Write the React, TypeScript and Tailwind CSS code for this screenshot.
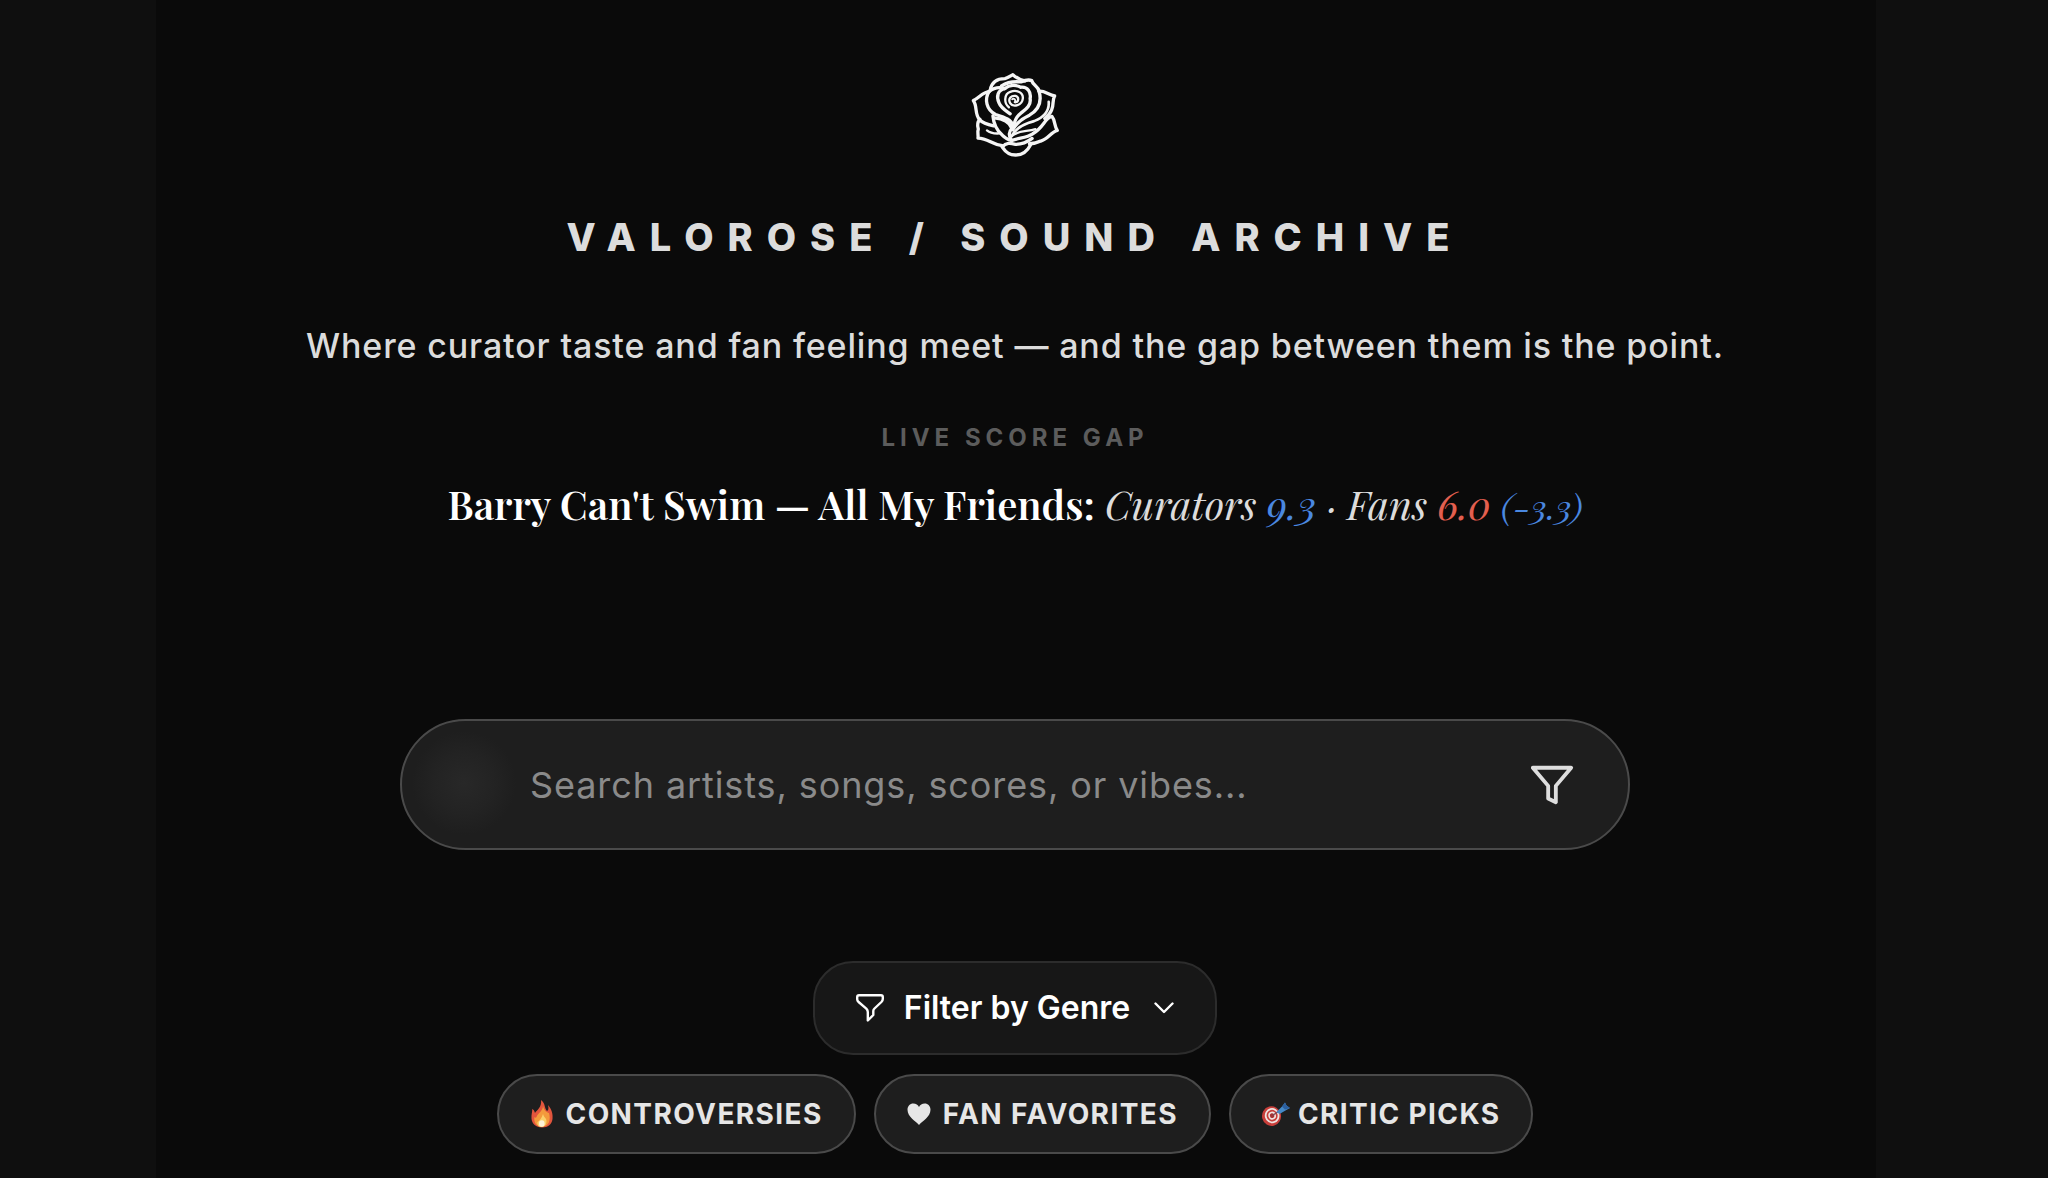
import { useState } from "react";
import type { ReactNode } from "react";

type Chip = { id: string; label: string; icon: ReactNode };

function RoseLogo() {
  return (
    <svg
      viewBox="36 34 268 256"
      className="w-[89px] h-[85px]"
      fill="none"
      stroke="#f5f5f5"
      strokeWidth="10"
      strokeLinecap="round"
      strokeLinejoin="round"
      aria-label="Valorose"
    >
      {/* outer petals */}
      <path d="M94 88C98 66 114 54 138 54C147 52 155 46 162 42C171 50 184 58 198 61" />
      <path d="M128 76C146 64 166 62 186 64C200 58 210 56 219 60C222 74 238 76 241 92" />
      <path d="M90 93C72 94 60 112 43 120C56 138 46 160 62 178C72 188 86 192 104 196" />
      <path d="M241 92C258 90 270 103 288 106C280 118 286 134 279 148C275 158 268 166 258 174" />
      <path d="M63 176C56 184 54 194 58 206C54 216 59 224 57 233C88 234 98 252 130 256" />
      <path d="M280 168C290 180 286 196 296 210C276 216 268 236 246 242C236 247 226 250 212 250" />
      <path d="M130 260C142 246 154 248 170 252C188 252 204 246 220 234M130 260C142 278 152 284 170 284C190 284 206 272 216 252" />
      {/* middle petals */}
      <path d="M90 93C76 116 82 148 110 162C136 170 158 176 165 200" />
      <path d="M90 93C104 82 122 78 138 84C152 72 172 72 186 80C206 78 218 94 214 114C218 136 198 148 186 158C176 166 168 176 166 192" />
      <path d="M138 84C116 88 112 108 120 126C126 142 140 150 154 160" />
      <path d="M241 92C250 124 240 148 212 164C190 174 174 186 162 208" />
      <path d="M270 124C272 150 256 170 226 182C196 190 170 202 158 228" strokeWidth="8" />
      {/* lower petals */}
      <path d="M102 166C104 190 114 210 130 224C138 232 146 238 156 240" />
      <path d="M106 172C132 174 152 184 159 204C150 214 150 228 158 240" />
      <path d="M84 210C96 220 108 220 122 219" strokeWidth="7" />
      <path d="M278 168C256 176 256 200 222 220C204 232 182 232 160 240" />
      <path d="M160 226C178 210 204 214 230 206" strokeWidth="7" />
      {/* bud */}
      <path d="M150 140C134 128 136 100 154 94C174 86 194 96 192 114C190 134 164 142 154 128C146 114 158 104 170 106C182 110 180 126 168 125" strokeWidth="7" />
      <path d="M160 116C164 113 168 115 169 119" strokeWidth="6" />
    </svg>
  );
}

function SearchFunnel() {
  return (
    <svg viewBox="0 0 24 24" className="w-[46px] h-[46px]" fill="none" stroke="currentColor" strokeWidth="2" strokeLinecap="round" strokeLinejoin="round">
      <polygon points="22 3 2 3 10 12.46 10 19 14 21 14 12.46 22 3" />
    </svg>
  );
}

function GenreFunnel() {
  return (
    <svg viewBox="0 0 28 28" className="w-7 h-7" fill="none" stroke="currentColor" strokeWidth="2.4" strokeLinecap="round" strokeLinejoin="round">
      <path d="M3 1.2H25C26.200 1.200 26.800 2 26.800 3V5C26.800 6.300 26.200 7.200 25.400 8L18.500 14.500C17.700 15.300 17.300 16 17.300 17V21L11.800 26.500V18C11.800 16.500 11.200 15.500 10.300 14.600L2.600 8C1.700 7.200 1.200 6.400 1.200 5.200V3C1.200 2 1.800 1.200 3 1.200Z" />
    </svg>
  );
}

function FlameIcon() {
  return (
    <svg viewBox="-1 0 24 28" className="w-6 h-7">
      <path d="M10 0C15 4 13 8 16 11C18 10 17.500 7 17 5C21 10 22 14 21.500 19C21 24 17 27.500 11 27.500C5 27.500 1 24 .5 18.500C.2 14 1.500 12 1.200 9C3 10 3.600 11.500 4 13C6 10 11 7 10 0Z" fill="#e2553d" />
      <path d="M12 6C13 11 17 13 18 13C20 20 18 26.500 11 26.500C5 26.500 2.500 22 3.500 17C4.500 18 5 18 5.500 17C7 13 12 11 12 6Z" fill="#f39a3c" />
      <path d="M12 14C13 18 16 18 15.500 22C15 25.500 13 27 10.500 27C7.500 27 6 25 6.500 22C8 21 11 18 12 14Z" fill="#fbd06a" />
      <ellipse cx="10.800" cy="23.500" rx="2.800" ry="3.300" fill="#fdf3d8" />
    </svg>
  );
}

function HeartIcon() {
  return (
    <svg viewBox="0 0 24 22" className="w-6 h-[22px]" fill="currentColor">
      <path d="M12 22C9 18.500 .5 14 .5 6.800C.5 3 3 .5 6.300 .5C9 .5 11 2 12 4C13 2 15 .5 17.700 .5C21 .5 23.500 3 23.500 6.800C23.500 14 15 18.500 12 22Z" />
    </svg>
  );
}

function TargetIcon() {
  return (
    <svg viewBox="0 0 24 24" className="w-6 h-6 overflow-visible">
      <g transform="rotate(-14 10 14)">
        <ellipse cx="9.500" cy="14" rx="9.500" ry="9.800" fill="#c73e3a" />
        <ellipse cx="10.200" cy="13.700" rx="7.300" ry="7.600" fill="#efe3e0" />
        <ellipse cx="10.200" cy="13.700" rx="5.500" ry="5.800" fill="#c73e3a" />
        <ellipse cx="10.200" cy="13.700" rx="3.800" ry="4" fill="#efe3e0" />
        <ellipse cx="10.200" cy="13.700" rx="2.200" ry="2.400" fill="#a83232" />
      </g>
      <path d="M10.500 13.500L17 9" stroke="#7b4a55" strokeWidth="1.400" />
      <path d="M14.500 10L20 4.500L23 .5L24.500 3.500L28 6L23.500 8.500L17.500 12Z" fill="#4589c7" />
      <path d="M20 4.500L23 .5L24.500 3.500L28 6L23 7.500Z" fill="#2c5f9e" />
    </svg>
  );
}

const chips: Chip[] = [
  { id: "controversies", label: "Controversies", icon: <FlameIcon /> },
  { id: "fans", label: "Fan Favorites", icon: <HeartIcon /> },
  { id: "critics", label: "Critic Picks", icon: <TargetIcon /> },
];

function ScoreGap() {
  return (
    <section className="mt-[52px] flex flex-col items-center">
      <h2 className="text-2xl leading-8 font-bold tracking-[5px] uppercase text-[#5c5c5c]">Live Score Gap</h2>
      <p className="mt-[22px] font-['Playfair_Display','Liberation_Serif',serif] text-[40px] leading-[56px] text-[#dcdcdc] text-center">
        <strong className="font-semibold text-white">Barry Can't Swim — All My Friends:</strong>{" "}
        <em>
          Curators <span className="text-[#4a88e0]">9.3</span> · Fans <span className="text-[#e35f4f]">6.0</span>{" "}
          <span className="text-[34px] text-[#4a88e0]">(-3.3)</span>
        </em>
      </p>
    </section>
  );
}

function SearchBar() {
  const [query, setQuery] = useState("");

  return (
    <form
      role="search"
      onSubmit={(e) => e.preventDefault()}
      className="mt-[185px] w-full max-w-[1230px] h-[131px] pl-32 pr-[53px] flex items-center rounded-full border-2 border-[#4a4a4a] bg-[#1e1e1e] bg-[radial-gradient(circle_at_62px_62px,#282828_0px,#232323_30px,#1e1e1e_52px)]"
    >
      <input
        type="search"
        aria-label="Search the archive"
        value={query}
        onChange={(e) => setQuery(e.target.value)}
        placeholder="Search artists, songs, scores, or vibes..."
        className="flex-1 min-w-0 h-full bg-transparent outline-none text-4xl leading-[56px] tracking-wide text-white placeholder:text-[#8a8a8a]"
      />
      <button type="button" aria-label="Search filters" className="text-[#dedede]">
        <SearchFunnel />
      </button>
    </form>
  );
}

export default function App() {
  const [active, setActive] = useState<string | null>(null);

  return (
    <div className="min-h-screen bg-[#0f0f0f] pr-4 font-['Inter',sans-serif]">
      <main className="mx-auto max-w-[1720px] min-h-screen pl-8 pr-[34px] pt-[72px] pb-5 flex flex-col items-center bg-[#0a0a0a]">
        <header className="flex flex-col items-center">
          <RoseLogo />
          <h1 className="mt-[56px] text-[38px] leading-[48px] font-extrabold tracking-[14px] uppercase text-[#dcdcdc]">
            Valorose / Sound Archive
          </h1>
          <p className="mt-[61px] text-[34px] leading-[48px] font-medium tracking-wide text-[#dcdcdc] text-center">
            Where curator taste and fan feeling meet — and the gap between them is the point.
          </p>
        </header>

        <ScoreGap />
        <SearchBar />

        <button
          type="button"
          aria-haspopup="listbox"
          className="mt-[111px] h-[94px] px-[41px] flex items-center rounded-[40px] border-2 border-[#2c2c2c] bg-[#171717] text-[32px] font-semibold text-white"
        >
          <GenreFunnel />
          <span className="ml-5">Filter by Genre</span>
          <svg viewBox="0 0 20 12" className="ml-6 w-5 h-3" fill="none" stroke="currentColor" strokeWidth="2.4" strokeLinecap="round" strokeLinejoin="round">
            <path d="M1.500 1.500L10 10L18.500 1.500" />
          </svg>
        </button>

        <div className="mt-[19px] flex flex-wrap justify-center gap-[18px]">
          {chips.map((chip) => (
            <button
              key={chip.id}
              type="button"
              aria-pressed={active === chip.id}
              onClick={() => setActive(active === chip.id ? null : chip.id)}
              className="h-20 px-[31px] flex items-center gap-3 rounded-full border-2 border-[#4a4a4a] bg-[#1e1e1e] text-[28px] font-bold tracking-wider uppercase text-[#e6e6e6]"
            >
              {chip.icon}
              {chip.label}
            </button>
          ))}
        </div>
      </main>
    </div>
  );
}
